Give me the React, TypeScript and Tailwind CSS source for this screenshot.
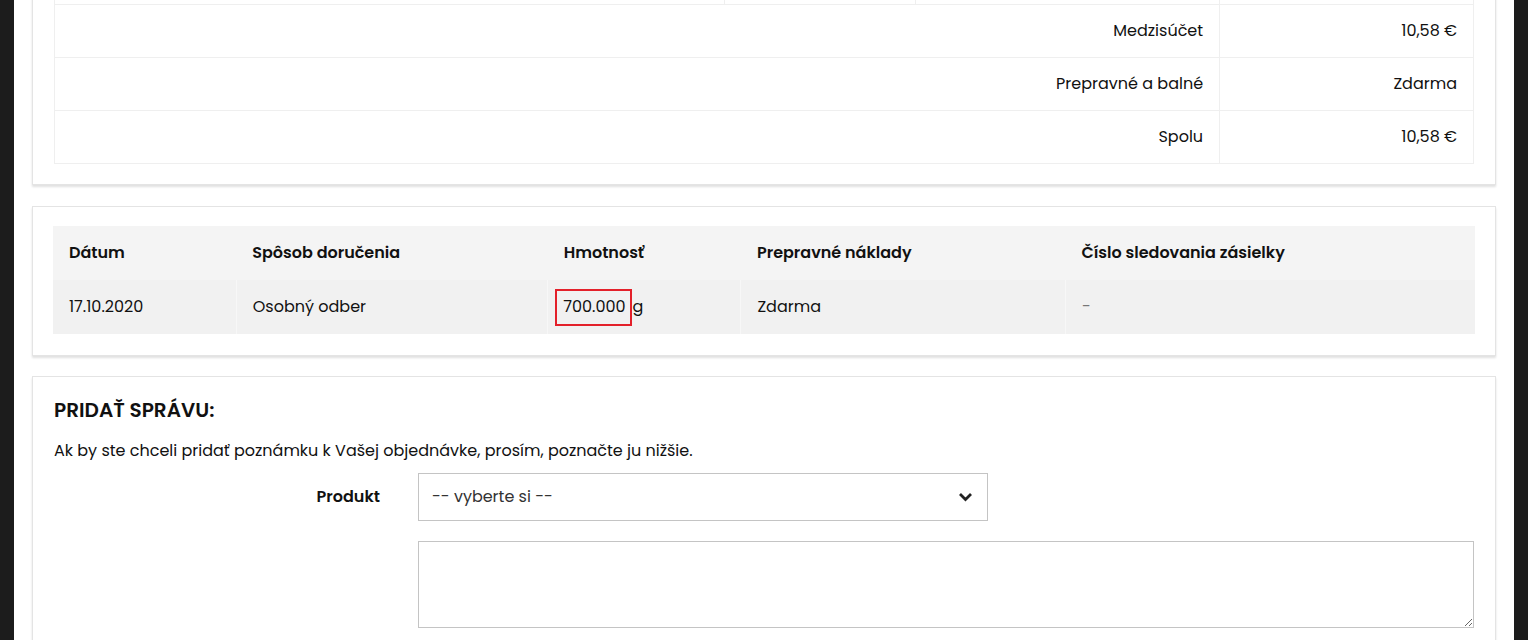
const font = "font-['Poppins','Open_Sans',sans-serif]";

function Card({ children, className = "" }: { children: React.ReactNode; className?: string }) {
  return (
    <section
      className={`mx-[18px] border border-[#e4e4e4] bg-white shadow-[0_2px_2px_rgba(0,0,0,0.12)] ${className}`}
    >
      {children}
    </section>
  );
}

const summary = [
  { label: "Medzisúčet", value: "10,58 €" },
  { label: "Prepravné a balné", value: "Zdarma" },
  { label: "Spolu", value: "10,58 €" },
];

function TotalsCard() {
  return (
    <Card className="-mt-[60px] px-[21px] pb-[20px] pt-[10px]">
      <table className="w-full border-collapse text-[16px] text-[#111]">
        <colgroup>
          <col className="w-[671px]" />
          <col className="w-[191px]" />
          <col className="w-[304px]" />
          <col className="w-[254px]" />
        </colgroup>
        <tbody>
          <tr className="h-[53px]">
            <td className="border border-[#efefef]" />
            <td className="border border-[#efefef]" />
            <td className="border border-[#efefef]" />
            <td className="border border-[#efefef]" />
          </tr>
          {summary.map((row) => (
            <tr key={row.label} className="h-[53px]">
              <td colSpan={3} className="border border-[#efefef] px-4 text-right">
                {row.label}
              </td>
              <td className="border border-[#efefef] px-4 text-right">{row.value}</td>
            </tr>
          ))}
        </tbody>
      </table>
    </Card>
  );
}

function ShippingCard() {
  return (
    <Card className="mt-[21px] px-[20px] pb-[21px] pt-[19px]">
      <table className="w-full border-collapse text-left text-[16px] text-[#111]">
        <colgroup>
          <col className="w-[183px]" />
          <col className="w-[311px]" />
          <col className="w-[193px]" />
          <col className="w-[324px]" />
          <col className="w-[409px]" />
        </colgroup>
        <thead>
          <tr className="h-[54px] bg-[#f4f4f4]">
            <th className="px-4 font-semibold">Dátum</th>
            <th className="px-4 font-semibold">Spôsob doručenia</th>
            <th className="px-4 font-semibold">Hmotnosť</th>
            <th className="px-4 font-semibold">Prepravné náklady</th>
            <th className="px-4 font-semibold">Číslo sledovania zásielky</th>
          </tr>
        </thead>
        <tbody>
          <tr className="h-[54px] bg-[#f1f1f1]">
            <td className="border-r border-[#f7f7f7] px-4">17.10.2020</td>
            <td className="border-r border-[#f7f7f7] px-4">Osobný odber</td>
            <td className="border-r border-[#f7f7f7] pl-[7px] pr-4">
              <span className="inline-flex items-center">
                <span className="inline-flex h-[37px] items-center border-2 border-[#e3202a] pl-[6px] pr-[4px]">
                  700.000
                </span>
                <span className="ml-px">g</span>
              </span>
            </td>
            <td className="border-r border-[#f7f7f7] px-4">Zdarma</td>
            <td className="px-4 text-[#777]">-</td>
          </tr>
        </tbody>
      </table>
    </Card>
  );
}

function MessageCard() {
  return (
    <Card className="mt-[20px] px-[21px] pb-[40px] pt-[20px]">
      <h2 className="text-[20px] font-semibold leading-[26px] text-[#111]">PRIDAŤ SPRÁVU:</h2>
      <p className="mt-[17px] text-[16px] leading-[22px] text-[#111]">
        Ak by ste chceli pridať poznámku k Vašej objednávke, prosím, poznačte ju nižšie.
      </p>
      <div className="mt-[11px] grid grid-cols-[348px_1fr] gap-x-4">
        <label className="flex h-[48px] items-center justify-end pr-[22px] text-[16px] font-semibold text-[#111]">
          Produkt
        </label>
        <div className="relative flex h-[48px] w-[570px] items-center border border-[#c4c4c4] px-[13px] text-[16px] text-[#333]">
          -- vyberte si --
          <svg
            className="absolute right-[14px] top-1/2 -translate-y-1/2"
            width="15"
            height="10"
            viewBox="0 0 15 10"
          >
            <path d="M2 2l5.5 5.5L13 2" fill="none" stroke="#222" strokeWidth="2.8" />
          </svg>
        </div>
        <div />
        <textarea className="mt-[20px] h-[87px] w-full border border-[#c4c4c4] outline-none" />
      </div>
    </Card>
  );
}

export default function App() {
  return (
    <div className={`min-h-[640px] overflow-hidden bg-[#1c1c1c] px-[14px] ${font}`}>
      <main className="h-[640px] overflow-hidden bg-white">
        <TotalsCard />
        <ShippingCard />
        <MessageCard />
      </main>
    </div>
  );
}
